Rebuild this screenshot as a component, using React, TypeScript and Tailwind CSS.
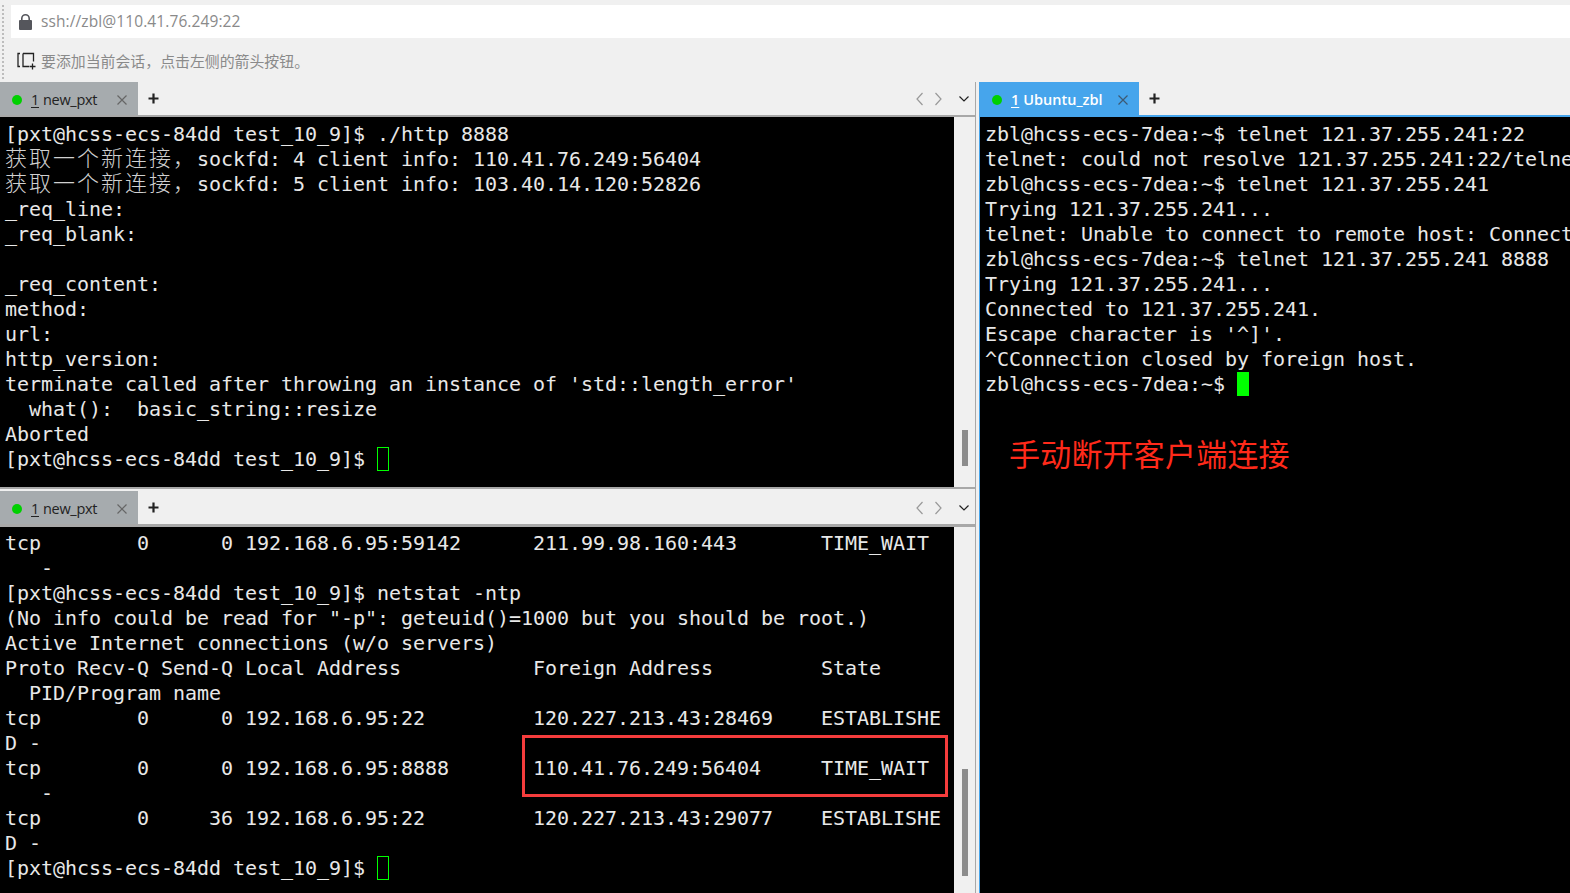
import React from "react";

const MONO = "font-['DejaVu_Sans_Mono',monospace]";

function Line({ text }: { text: string }) {
  const parts = text.split(/([\u4e00-\u9fff，]+)/);
  return (
    <div className="h-[25px] whitespace-pre">
      {parts.map((p, i) =>
        /[\u4e00-\u9fff，]/.test(p) ? (
          <span key={i} className="font-['Noto_Sans_CJK_SC',sans-serif] text-[22px] leading-[0] tracking-[2px] font-light text-[#d0d0d0]">
            {p}
          </span>
        ) : (
          <span key={i}>{p}</span>
        )
      )}
    </div>
  );
}

function Cursor({ solid }: { solid?: boolean }) {
  return (
    <span className={`inline-block w-[12px] h-[24px] align-[-5px] border border-[#00ff00] ${solid ? "bg-[#00ff00]" : ""}`} />
  );
}

function Terminal({ lines, cursor, solid, thumb, pt }: { lines: string[]; cursor: string; solid?: boolean; thumb?: string; pt: string }) {
  return (
    <div className="flex flex-1 min-h-0">
      <div className={`flex-1 min-w-0 bg-black overflow-hidden text-[20px] leading-[25px] tracking-[-0.04px] text-[#e8e8e8] pl-[5px] ${pt} ${MONO}`}>
        {lines.map((l, i) => (
          <Line key={i} text={l} />
        ))}
        <div className="h-[25px] whitespace-pre">
          {cursor}
          <Cursor solid={solid} />
        </div>
      </div>
      {thumb && (
        <div className="w-[21px] shrink-0 bg-[#f0f0f0] pl-[8px]">
          <div className={`w-[6px] bg-[#8c8c8c] ${thumb}`} />
        </div>
      )}
    </div>
  );
}

function Close({ color }: { color: string }) {
  return (
    <svg width="10" height="10" viewBox="0 0 10 10" fill="none" stroke={color} strokeWidth="1.2">
      <path d="M.5.5l9 9M9.5.5l-9 9" />
    </svg>
  );
}

function TabBar({ name, active, controls }: { name: string; active?: boolean; controls?: boolean }) {
  return (
    <div className="h-[33px] shrink-0 flex items-stretch bg-[#f0f0f0]">
      <div className={`flex items-center pt-[2px] ${active ? "w-[160px] pl-[13px] bg-[#46a5ec] text-white font-semibold" : "w-[138px] pl-[12px] bg-[#a6abae] text-[#222]"}`}>
        <span className="w-[10px] h-[10px] rounded-full bg-[#00d000] shrink-0" />
        <span className={`font-['Open_Sans',sans-serif] whitespace-pre ml-[9px] ${active ? "text-[14.5px] tracking-[0px]" : "text-[14.5px] tracking-[-0.3px]"}`}>
          <span className="underline underline-offset-2">1</span>
          <span className="ml-[4px]">{name}</span>
        </span>
        <span className="ml-auto flex mr-[11px]">
          <Close color={active ? "#3d5a73" : "#666"} />
        </span>
      </div>
      <div className="ml-[10px] flex items-center">
        <svg width="11" height="11" viewBox="0 0 11 11" stroke="#222" strokeWidth="2.2">
          <path d="M5.5 0.5v10M0.5 5.5h10" />
        </svg>
      </div>
      {controls && (
        <div className="ml-auto flex items-center pr-[6px] gap-[12px]">
          <svg width="7" height="14" viewBox="0 0 7 14" fill="none" stroke="#999" strokeWidth="1.2">
            <path d="M6.5 1L1 7l5.5 6" />
          </svg>
          <svg width="7" height="14" viewBox="0 0 7 14" fill="none" stroke="#999" strokeWidth="1.2">
            <path d="M.5 1L6 7l-5.5 6" />
          </svg>
          <svg className="ml-[5px]" width="10" height="6" viewBox="0 0 10 6" fill="none" stroke="#222" strokeWidth="1.2">
            <path d="M.5.5L5 5 9.5.5" />
          </svg>
        </div>
      )}
    </div>
  );
}

const topLines = [
  "[pxt@hcss-ecs-84dd test_10_9]$ ./http 8888",
  "获取一个新连接，sockfd: 4 client info: 110.41.76.249:56404",
  "获取一个新连接，sockfd: 5 client info: 103.40.14.120:52826",
  "_req_line:",
  "_req_blank:",
  "",
  "_req_content:",
  "method:",
  "url:",
  "http_version:",
  "terminate called after throwing an instance of 'std::length_error'",
  "  what():  basic_string::resize",
  "Aborted",
];

const bottomLines = [
  "tcp        0      0 192.168.6.95:59142      211.99.98.160:443       TIME_WAIT",
  "   -",
  "[pxt@hcss-ecs-84dd test_10_9]$ netstat -ntp",
  '(No info could be read for "-p": geteuid()=1000 but you should be root.)',
  "Active Internet connections (w/o servers)",
  "Proto Recv-Q Send-Q Local Address           Foreign Address         State",
  "  PID/Program name",
  "tcp        0      0 192.168.6.95:22         120.227.213.43:28469    ESTABLISHE",
  "D -",
  "tcp        0      0 192.168.6.95:8888       110.41.76.249:56404     TIME_WAIT",
  "   -",
  "tcp        0     36 192.168.6.95:22         120.227.213.43:29077    ESTABLISHE",
  "D -",
];

const rightLines = [
  "zbl@hcss-ecs-7dea:~$ telnet 121.37.255.241:22",
  "telnet: could not resolve 121.37.255.241:22/telnet: Name or service not known",
  "zbl@hcss-ecs-7dea:~$ telnet 121.37.255.241",
  "Trying 121.37.255.241...",
  "telnet: Unable to connect to remote host: Connection refused",
  "zbl@hcss-ecs-7dea:~$ telnet 121.37.255.241 8888",
  "Trying 121.37.255.241...",
  "Connected to 121.37.255.241.",
  "Escape character is '^]'.",
  "^CConnection closed by foreign host.",
];

export default function App() {
  return (
    <div className="relative w-[1570px] h-[893px] overflow-hidden bg-[#f0f0f0] flex flex-col">
      <div className="h-[82px] shrink-0 flex">
        <div className="w-[11px] shrink-0 pl-[2px] pt-[5px]">
          <div className="w-[3px] h-[74px] border-l-2 border-dotted border-[#bdbdbd]" />
        </div>
        <div className="flex-1 flex flex-col">
          <div className="mt-[5px] h-[33px] bg-white flex items-center pl-[8px]">
            <svg width="13" height="16" viewBox="0 0 13 16" fill="#55565c">
              <path d="M2 6V4.5a4.5 4.5 0 0 1 9 0V6h1a1 1 0 0 1 1 1v8a1 1 0 0 1-1 1H1a1 1 0 0 1-1-1V7a1 1 0 0 1 1-1h1zm1.6 0h5.8V4.5a2.9 2.9 0 0 0-5.8 0V6z" />
            </svg>
            <span className="ml-[9px] font-['Open_Sans',sans-serif] text-[15.5px] tracking-[0.1px] text-[#8a8a8a]">ssh://zbl@110.41.76.249:22</span>
          </div>
          <div className="flex-1 flex items-center pl-[6px] pt-[2px]">
            <svg width="19" height="18" viewBox="0 0 19 18" fill="none" stroke="#222" strokeWidth="1.3">
              <path d="M3 1.5H1v13h2M6 1.5h10.5v8M6 1.5v13h6M12.5 14.5h6M15.5 11.5v6" />
            </svg>
            <span className="ml-[5px] font-['Noto_Sans_CJK_SC',sans-serif] text-[14.9px] text-[#8a8a8a]">要添加当前会话，点击左侧的箭头按钮。</span>
          </div>
        </div>
      </div>

      <div className="flex-1 min-h-0 flex">
        <div className="w-[976px] shrink-0 flex flex-col border-r border-[#a8a8a8]">
          <div className="h-[407px] shrink-0 flex flex-col border-b-2 border-[#a8a8a8]">
            <TabBar name="new_pxt" controls />
            <div className="h-[2px] shrink-0 bg-[#a8a8a8]" />
            <Terminal lines={topLines} cursor="[pxt@hcss-ecs-84dd test_10_9]$ " thumb="mt-[313px] h-[36px]" pt="pt-[5px]" />
          </div>
          <div className="h-[2px] shrink-0" />
          <div className="flex-1 min-h-0 flex flex-col">
            <TabBar name="new_pxt" controls />
            <div className="h-[3px] shrink-0 bg-[#a8a8a8]" />
            <Terminal lines={bottomLines} cursor="[pxt@hcss-ecs-84dd test_10_9]$ " thumb="mt-[242px] h-[107px]" pt="pt-[4px]" />
          </div>
        </div>
        <div className="w-[3px] shrink-0" />
        <div className="flex-1 min-w-0 flex flex-col">
          <TabBar name="Ubuntu_zbl" active />
          <div className="h-[2px] shrink-0 bg-[#46a5ec]" />
          <div className="flex-1 min-h-0 flex border-l border-[#46a5ec]">
            <Terminal lines={rightLines} cursor="zbl@hcss-ecs-7dea:~$ " solid pt="pt-[5px]" />
          </div>
        </div>
      </div>

      <div className="absolute left-[522px] top-[735px] w-[426px] h-[62px] border-[3px] border-[#f43c3c]" />
      <div className="absolute left-[1009px] top-[431px] font-['Noto_Sans_CJK_SC',sans-serif] text-[31px] tracking-[0.2px] leading-[44px] text-[#ff2a1a] whitespace-pre">
        手动断开客户端连接
      </div>
    </div>
  );
}
